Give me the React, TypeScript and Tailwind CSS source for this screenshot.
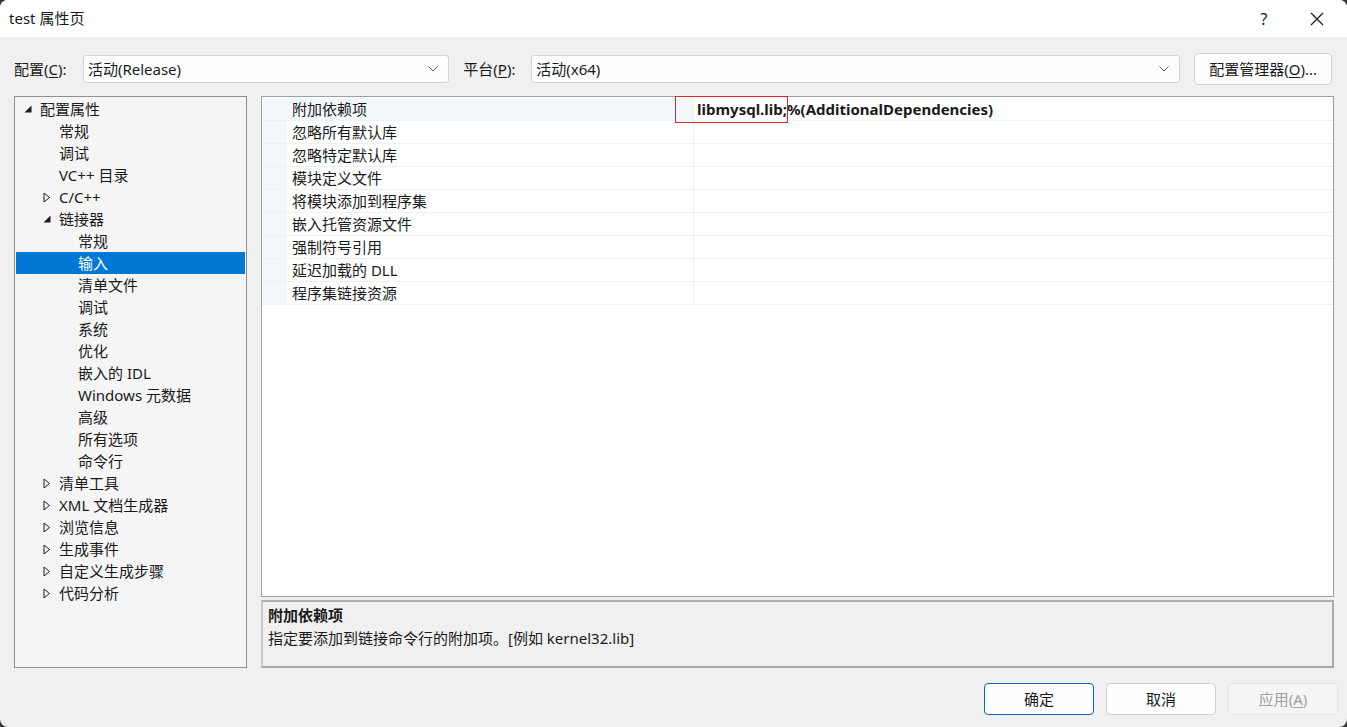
import React from "react";

const FONT = {
  fontFamily: '"Segoe UI", "Noto Sans", "Noto Sans CJK SC", sans-serif',
};

type Node = { label: string; level: number; exp?: "open" | "closed"; sel?: boolean };

const tree: Node[] = [
  { label: "配置属性", level: 0, exp: "open" },
  { label: "常规", level: 1 },
  { label: "调试", level: 1 },
  { label: "VC++ 目录", level: 1 },
  { label: "C/C++", level: 1, exp: "closed" },
  { label: "链接器", level: 1, exp: "open" },
  { label: "常规", level: 2 },
  { label: "输入", level: 2, sel: true },
  { label: "清单文件", level: 2 },
  { label: "调试", level: 2 },
  { label: "系统", level: 2 },
  { label: "优化", level: 2 },
  { label: "嵌入的 IDL", level: 2 },
  { label: "Windows 元数据", level: 2 },
  { label: "高级", level: 2 },
  { label: "所有选项", level: 2 },
  { label: "命令行", level: 2 },
  { label: "清单工具", level: 1, exp: "closed" },
  { label: "XML 文档生成器", level: 1, exp: "closed" },
  { label: "浏览信息", level: 1, exp: "closed" },
  { label: "生成事件", level: 1, exp: "closed" },
  { label: "自定义生成步骤", level: 1, exp: "closed" },
  { label: "代码分析", level: 1, exp: "closed" },
];

const props = [
  "附加依赖项",
  "忽略所有默认库",
  "忽略特定默认库",
  "模块定义文件",
  "将模块添加到程序集",
  "嵌入托管资源文件",
  "强制符号引用",
  "延迟加载的 DLL",
  "程序集链接资源",
];

function Chevron() {
  return (
    <svg width="12" height="8" viewBox="0 0 12 8" className="shrink-0">
      <path d="M1.5 1.5 L6 6 L10.5 1.5" fill="none" stroke="#606060" strokeWidth="1" />
    </svg>
  );
}

function Combo({ text, className }: { text: string; className: string }) {
  return (
    <div
      className={`h-[28px] bg-[#fdfdfd] border border-[#d4d4d4] rounded-[3px] flex items-center pl-[4px] pr-[9px] ${className}`}
    >
      <span className="flex-1 text-[15px] text-[#1a1a1a]">{text}</span>
      <Chevron />
    </div>
  );
}

function Expander({ exp, sel }: { exp?: "open" | "closed"; sel?: boolean }) {
  if (exp === "open")
    return (
      <svg width="8" height="8" viewBox="0 0 8 8">
        <polygon points="7.5,0.5 7.5,7.5 0.5,7.5" fill={sel ? "#fff" : "#1e1e1e"} />
      </svg>
    );
  if (exp === "closed")
    return (
      <svg width="8" height="11" viewBox="0 0 8 11">
        <polygon points="1,1 6.5,5.5 1,10" fill="none" stroke="#1e1e1e" strokeWidth="1" />
      </svg>
    );
  return null;
}

function Btn({
  children,
  primary,
  disabled,
}: {
  children: React.ReactNode;
  primary?: boolean;
  disabled?: boolean;
}) {
  return (
    <div
      className={`w-[110px] h-[32px] rounded-[4px] flex items-center justify-center text-[15px] ${
        primary
          ? "border border-[#0067c0] bg-[#fdfdfd] text-[#1a1a1a]"
          : disabled
          ? "border border-[#e5e5e5] bg-[#f5f5f5] text-[#a0a0a0]"
          : "border border-[#d0d0d0] bg-[#fdfdfd] text-[#1a1a1a]"
      }`}
    >
      {children}
    </div>
  );
}

export default function App() {
  return (
    <div className="w-[1347px] h-[727px] bg-[#3a3a3a] overflow-hidden" style={FONT}>
      <div className="w-full h-full bg-[#f0f0f0] rounded-[8px] overflow-hidden flex flex-col">
        {/* title bar */}
        <div className="h-[37px] bg-white flex items-center shrink-0">
          <span className="pl-[9px] text-[15px] text-[#1a1a1a] flex-1">test 属性页</span>
          <span className="w-[20px] text-center text-[16px] text-[#1a1a1a] mr-[36px]">?</span>
          <svg width="14" height="14" viewBox="0 0 14 14" className="mr-[23px]">
            <path d="M1 1 L13 13 M13 1 L1 13" stroke="#1a1a1a" strokeWidth="1.2" />
          </svg>
        </div>

        {/* config row */}
        <div className="flex items-center mt-[16px] h-[32px] pl-[14px] pr-[15px] shrink-0">
          <span className="text-[15px] text-[#1a1a1a] w-[69px]">
            配置(<span className="underline underline-offset-2">C</span>):
          </span>
          <Combo text="活动(Release)" className="w-[367px]" />
          <span className="text-[15px] text-[#1a1a1a] ml-[14px] w-[68px]">
            平台(<span className="underline underline-offset-2">P</span>):
          </span>
          <Combo text="活动(x64)" className="w-[650px]" />
          <div className="ml-[14px] w-[138px] h-[32px] bg-[#fdfdfd] border border-[#d4d4d4] rounded-[4px] flex items-center justify-center text-[15px] text-[#1a1a1a]">
            配置管理器(<span className="underline underline-offset-2">O</span>)...
          </div>
        </div>

        {/* main */}
        <div className="flex mt-[11px] pl-[14px] pr-[13px] h-[572px] shrink-0">
          {/* tree */}
          <div className="w-[233px] h-full border border-[#8c9099] bg-[#f5f5f5] pt-[1px] px-[1px]">
            {tree.map((n, i) => (
              <div
                key={i}
                className={`h-[22px] flex items-center text-[15px] ${
                  n.sel ? "bg-[#0078d4] text-white" : "text-[#1a1a1a]"
                }`}
              >
                <div
                  className="flex items-center"
                  style={{ paddingLeft: 8 + n.level * 19 }}
                >
                  <div className="w-[15px] flex items-center">
                    <Expander exp={n.exp} sel={n.sel} />
                  </div>
                  <span className="pl-[1px]">{n.label}</span>
                </div>
              </div>
            ))}
          </div>

          {/* right column */}
          <div className="flex-1 ml-[14px] flex flex-col">
            <div className="h-[501px] border border-[#a0a0a0] bg-white relative pt-[1px]">
              <div className="flex flex-col">
                {props.map((p, i) => (
                  <div key={i} className="h-[23px] flex border-b border-[#f0f0f0]">
                    <div className="w-[25px] bg-[#f3f6fb]" />
                    <div
                      className={`w-[407px] border-r border-[#f0f0f0] flex items-center pl-[5px] text-[15px] text-[#1a1a1a] ${
                        i === 0 ? "bg-[#f3f6fb]" : "bg-white"
                      }`}
                    >
                      {p}
                    </div>
                    <div className="flex-1 flex items-center pl-[3px] text-[15px] font-bold text-[#1a1a1a]">
                      {i === 0 ? "libmysql.lib;%(AdditionalDependencies)" : ""}
                    </div>
                  </div>
                ))}
              </div>
              <div className="absolute left-[413px] top-[-1px] w-[113px] h-[27px] border border-[#e0242a]" />
            </div>
            <div className="mt-[3px] h-[68px] border-2 border-[#a8a8a8] border-l-[#c8c8c8] border-t-[#b0b0b0] bg-[#f0f0f0] px-[5px] pt-[2px]">
              <div className="text-[15px] font-bold text-[#1a1a1a] leading-[22px]">附加依赖项</div>
              <div className="text-[15px] text-[#1a1a1a] leading-[24px]">
                指定要添加到链接命令行的附加项。[例如 kernel32.lib]
              </div>
            </div>
          </div>
        </div>

        {/* buttons */}
        <div className="flex justify-end gap-[12px] mt-[15px] pr-[9px]">
          <Btn primary>确定</Btn>
          <Btn>取消</Btn>
          <Btn disabled>
            应用(<span className="underline underline-offset-2">A</span>)
          </Btn>
        </div>
      </div>
    </div>
  );
}
